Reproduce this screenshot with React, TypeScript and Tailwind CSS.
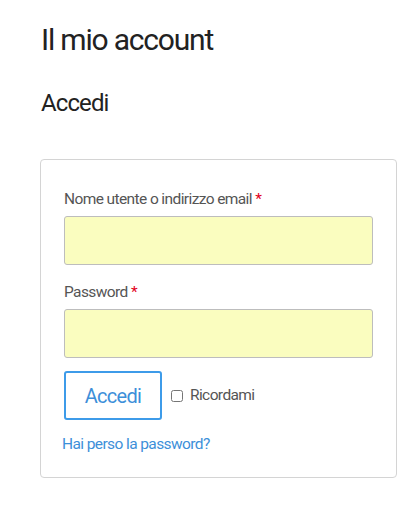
export default function App() {
  return (
    <div
      className="min-h-[521px] bg-white px-[40px] pt-[22px] text-[#333]"
      style={{ fontFamily: 'Roboto, "Liberation Sans", sans-serif' }}
    >
      <h1 className="ml-px text-[30px] leading-[36px] tracking-[-1.2px] text-[#222]">Il mio account</h1>
      <h2 className="ml-px mt-[30px] text-[24px] leading-[30px] tracking-[-0.9px] text-[#222]">Accedi</h2>

      <form className="mt-[41px] w-[357px] rounded-[4px] border border-[#d4d4d4] px-[23px] pt-[28px] pb-[22px]">
        <label className="block text-[15.5px] leading-[22px] tracking-[-0.6px] text-[#555]">
          Nome utente o indirizzo email <span className="text-[#e2001a]">*</span>
        </label>
        <input
          type="text"
          className="mt-[6px] block h-[49px] w-[309px] rounded-[3px] border border-[#bdbdbd] bg-[#fafdbf] outline-none"
        />

        <label className="mt-[16px] block text-[15.5px] leading-[22px] tracking-[-0.6px] text-[#555]">
          Password <span className="text-[#e2001a]">*</span>
        </label>
        <input
          type="password"
          className="mt-[6px] block h-[49px] w-[309px] rounded-[3px] border border-[#bdbdbd] bg-[#fafdbf] outline-none"
        />

        <div className="mt-[13px] flex items-center">
          <button
            type="button"
            className="h-[49px] w-[98px] rounded-[3px] border-2 border-[#3d9be9] text-[20px] tracking-[-0.7px] text-[#3d8fd9]"
          >
            Accedi
          </button>
          <label className="ml-[9px] flex items-center text-[15.5px] tracking-[-0.6px] text-[#555]">
            <input type="checkbox" className="h-[12px] w-[12px]" />
            <span className="ml-[7px]">Ricordami</span>
          </label>
        </div>

        <a href="#" className="mt-[13px] -ml-[2px] block text-[15.5px] leading-[22px] tracking-[-0.6px] text-[#3d8fd9]">
          Hai perso la password?
        </a>
      </form>
    </div>
  );
}
